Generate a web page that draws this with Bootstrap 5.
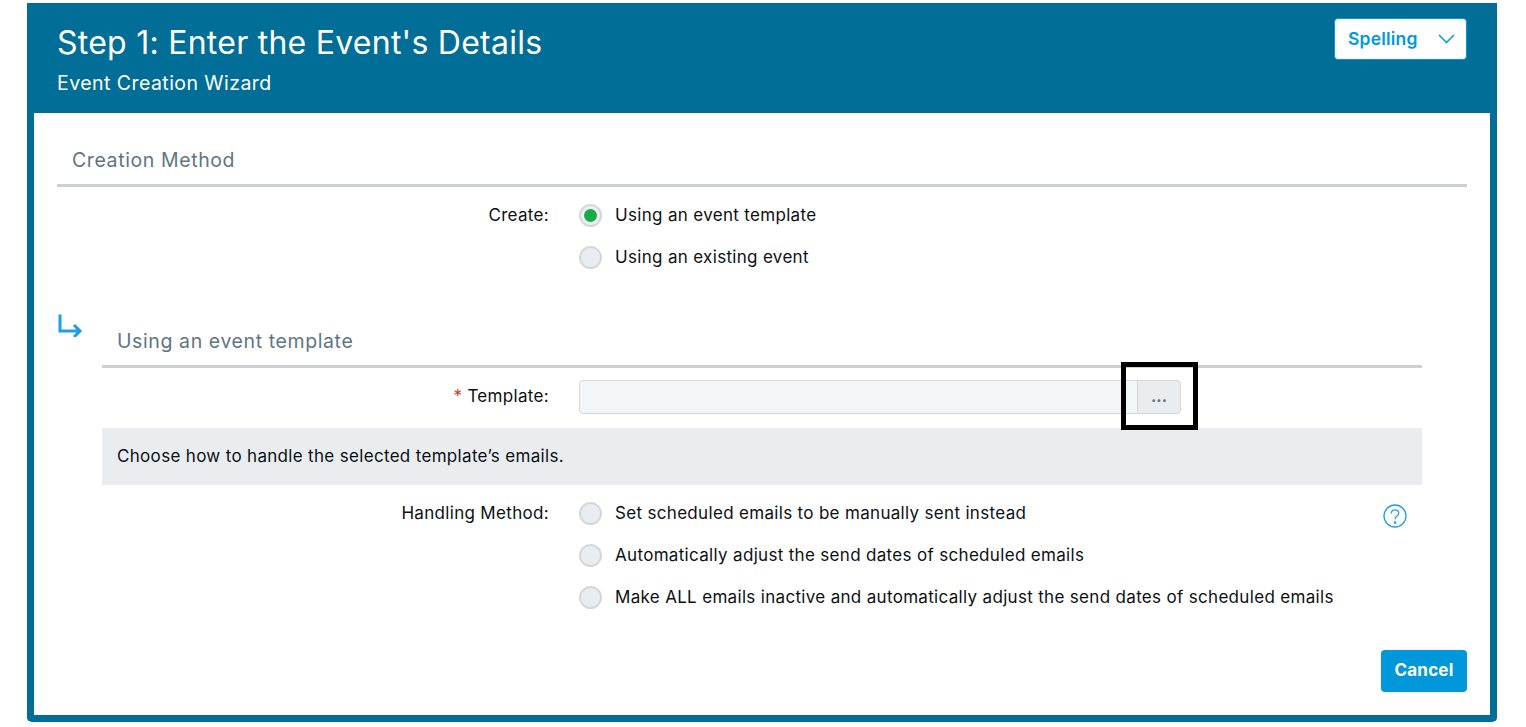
<!DOCTYPE html>
<html lang="en">
<head>
<meta charset="utf-8">
<title>Event Creation Wizard</title>
<link href="https://cdn.jsdelivr.net/npm/bootstrap@5.3.0/dist/css/bootstrap.min.css" rel="stylesheet">
<style>
html,body{height:100%;background:#fff;overflow:hidden}
body{font-family:Inter,Roboto,"Liberation Sans",sans-serif;font-size:17px;letter-spacing:.32px;color:#0d1013;padding:3px 29px 5px 27px}
.wiz{height:719px;border:7px solid #006e97;border-top:0;border-radius:5px;display:flex;flex-direction:column;background:#fff}
.wiz-head{background:#006e97;color:#fff;height:110px;margin:0 -7px;padding:20px 30px 0 30px}
.wiz-title{font-size:32px;font-weight:400;line-height:38px;margin:1px 0 8px;letter-spacing:.25px}
.wiz-sub{font-size:19.5px;line-height:26px;font-weight:400;margin:0;letter-spacing:.45px}
.spell{width:133px;height:42px;background:#fff;border:1px solid #0098db;border-radius:4px;color:#0098db;font-weight:600;font-size:17.500px;letter-spacing:.2px;padding:0 11px 0 13px;margin-top:-5px}
.wiz-body{flex:1;padding:27px 23px 23px;position:relative}
.sect{font-size:19.5px;letter-spacing:.6px;line-height:26px;color:#5f7582;padding:7px 15px 11px;border-bottom:3px solid #ccd0d3}
.rowline{display:flex;align-items:flex-start}
.lab{width:522px;text-align:right;padding-right:30px;line-height:26px}
.sub-lab{width:477px}
.opts{display:flex;flex-direction:column;gap:16px;flex:1}
.opt{display:flex;align-items:center;gap:13px;line-height:26px;height:26px}
.rad{width:23px;height:23px;border:2px solid #d4d8db;background:#e9edf0;border-radius:50%;flex:none;display:flex;align-items:center;justify-content:center}
.rad i{width:13px;height:13px;background:#1aaa46;border-radius:50%}
.rad-on{background:#eef1f3}
.tmpl{width:602px;height:34px;display:flex}
.tmpl-in{flex:1;background:#f3f6f8;border:1px solid #d4d8db;border-radius:4px 0 0 4px;margin-right:-1px}
.tmpl-btn{width:44px;background:#e9edf0;border:1px solid #d4d8db;border-radius:0 4px 4px 0;color:#5f7582;font-weight:800;font-size:15px;line-height:30px;text-align:center;padding:0}
.note{background:#e9edf0;height:57px;line-height:56px;padding:0 15px;margin-top:14px}
.req{color:#d0342c}
.cancel{background:#0098db;color:#fff;border:0;border-radius:4px;width:86px;height:42px;font-weight:700;font-size:17px;padding:0 0 1px;letter-spacing:.2px}
.foot{position:absolute;right:23px;bottom:23px}
.arrow{position:absolute;left:23px;top:200px}
.help{position:absolute;right:83px;top:391px}
.hilite{position:absolute;left:1087px;top:249px;width:77px;height:68px;border:5px solid #000}
.inner{margin:51px 45px 0}
.gap-create{margin-top:15px}
.gap-tmpl{margin-top:12px}
.tmpl-lab{margin-top:-2px}
.gap-hand{margin-top:15px}
</style>
</head>
<body>
<div class="wiz">
  <header class="wiz-head d-flex justify-content-between align-items-start">
    <div>
      <h1 class="wiz-title">Step 1: Enter the Event's Details</h1>
      <p class="wiz-sub">Event Creation Wizard</p>
    </div>
    <button class="spell d-flex align-items-center justify-content-between" type="button">Spelling
      <svg width="17" height="10" viewBox="0 0 17 10" fill="none" stroke="#0098db" stroke-width="1.5"><path d="M1 1l7.5 7.5L16 1"/></svg>
    </button>
  </header>
  <main class="wiz-body">
    <div class="sect">Creation Method</div>
    <div class="rowline gap-create">
      <div class="lab">Create:</div>
      <div class="opts">
        <div class="opt"><span class="rad rad-on"><i></i></span>Using an event template</div>
        <div class="opt"><span class="rad"></span>Using an existing event</div>
      </div>
    </div>
    <svg class="arrow" width="26" height="24" viewBox="0 0 26 24" fill="none" stroke="#1f9fe3" stroke-width="3"><path d="M3 1.500V18H22M17 12l6 6-6 6"/></svg>
    <div class="inner">
      <div class="sect">Using an event template</div>
      <div class="rowline gap-tmpl align-items-center">
        <div class="lab sub-lab tmpl-lab"><span class="req">*</span> Template:</div>
        <div class="tmpl"><div class="tmpl-in"></div><button class="tmpl-btn" type="button">...</button></div>
      </div>
      <div class="note">Choose how to handle the selected template’s emails.</div>
      <div class="rowline gap-hand">
        <div class="lab sub-lab">Handling Method:</div>
        <div class="opts">
          <div class="opt"><span class="rad"></span>Set scheduled emails to be manually sent instead</div>
          <div class="opt"><span class="rad"></span>Automatically adjust the send dates of scheduled emails</div>
          <div class="opt"><span class="rad"></span>Make ALL emails inactive and automatically adjust the send dates of scheduled emails</div>
        </div>
      </div>
    </div>
    <svg class="help" width="24" height="24" viewBox="0 0 24 24" fill="none" stroke="#1f9fe3" stroke-width="1.300"><circle cx="12" cy="12" r="11"/><path d="M8.300 9.500c0-2.300 1.700-3.700 3.700-3.700s3.700 1.400 3.700 3.500c0 3-3.700 3-3.700 6"/><circle cx="12" cy="18.500" r=".7" fill="#1f9fe3"/></svg>
    <div class="hilite"></div>
    <div class="foot"><button class="cancel" type="button">Cancel</button></div>
  </main>
</div>
<script src="https://cdn.jsdelivr.net/npm/bootstrap@5.3.0/dist/js/bootstrap.bundle.min.js"></script>
</body>
</html>
